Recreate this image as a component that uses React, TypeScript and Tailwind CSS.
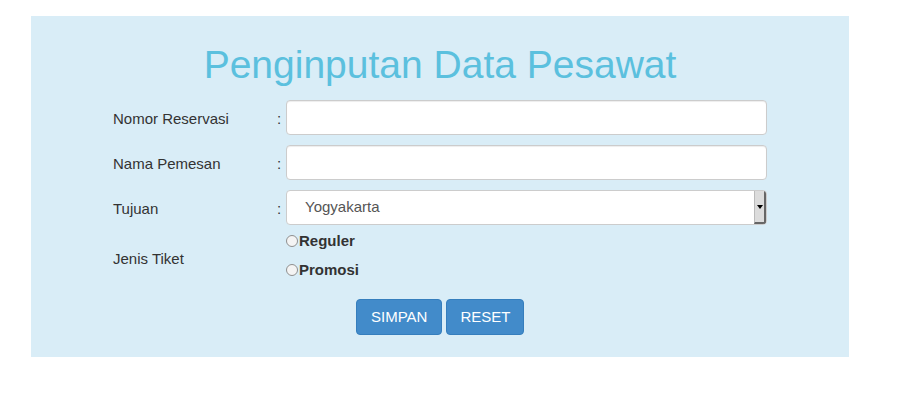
import React from 'react';

const font = { fontFamily: '"Liberation Sans", Arial, sans-serif' };

const Row: React.FC<{ label: string; children: React.ReactNode }> = ({ label, children }) => (
  <div className="flex items-center">
    <div className="w-[164px] text-[15px] text-[#333] pt-[3px]">{label}</div>
    <div className="w-[9px] text-[15px] text-[#333] pt-[3px]">:</div>
    {children}
  </div>
);

const Radio: React.FC<{ label: string }> = ({ label }) => (
  <label className="flex items-center h-[20px]">
    <span className="w-[12px] h-[12px] rounded-full border border-[#8f8f8f] bg-[#f4f4f4] mr-[1px]" />
    <span className="text-[15px] font-bold text-[#333]">{label}</span>
  </label>
);

export default function App() {
  return (
    <div className="bg-white w-[912px] h-[393px]" style={font}>
      <div className="ml-[31px] mt-[16px] w-[818px] h-[341px] bg-[#d9edf7] pt-[27px]">
        <h1 className="text-center text-[39px] leading-[43px] text-[#5bc0de]">Penginputan Data Pesawat</h1>
        <div className="pl-[82px] mt-[14px] flex flex-col gap-[10px]">
          <Row label="Nomor Reservasi">
            <div className="w-[481px] h-[35px] bg-white border border-[#ccc] rounded-[4px] shadow-[inset_0_1px_1px_rgba(0,0,0,0.075)]" />
          </Row>
          <Row label="Nama Pemesan">
            <div className="w-[481px] h-[35px] bg-white border border-[#ccc] rounded-[4px] shadow-[inset_0_1px_1px_rgba(0,0,0,0.075)]" />
          </Row>
          <Row label="Tujuan">
            <div className="w-[481px] h-[35px] bg-white border border-[#ccc] rounded-[4px] flex items-stretch overflow-hidden">
              <div className="flex-1 flex items-center pl-[18px] text-[15px] text-[#555]">Yogyakarta</div>
              <div className="w-[12px] bg-[#dcdcdc] border-l border-[#bbb] border-r-2 border-b-2 border-r-[#666] border-b-[#666] flex items-center justify-center">
                <svg width="6" height="4" viewBox="0 0 6 4"><path d="M0 0h6L3 4z" fill="#000" /></svg>
              </div>
            </div>
          </Row>
          <div className="flex items-center -mt-[4px]">
            <div className="w-[173px] text-[15px] text-[#333] pt-[8px]">Jenis Tiket</div>
            <div className="flex flex-col gap-[9px]">
              <Radio label="Reguler" />
              <Radio label="Promosi" />
            </div>
          </div>
        </div>
        <div className="flex gap-[4px] ml-[325px] mt-[19px]">
          <button className="h-[36px] px-[14px] bg-[#428bca] border border-[#357ebd] rounded-[4px] text-white text-[15px]">SIMPAN</button>
          <button className="h-[36px] px-[13px] bg-[#428bca] border border-[#357ebd] rounded-[4px] text-white text-[15px]">RESET</button>
        </div>
      </div>
    </div>
  );
}
